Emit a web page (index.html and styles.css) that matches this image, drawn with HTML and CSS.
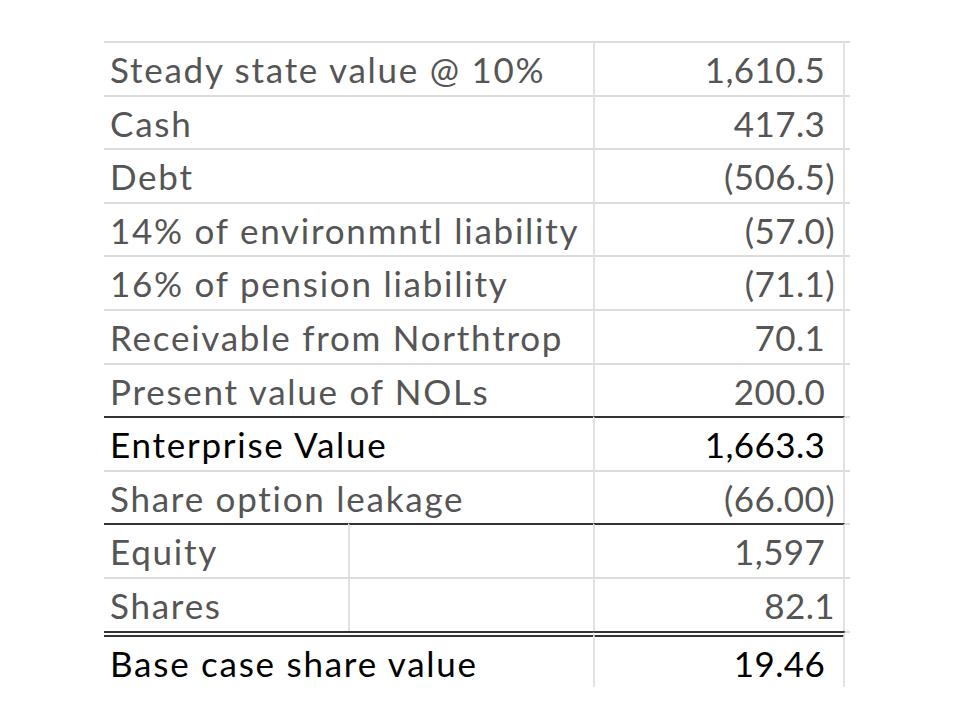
FILE: index.html
```html
<!DOCTYPE html>
<html>
<head>
<meta charset="utf-8">
<link rel="stylesheet" href="styles.css">
</head>
<body>
<div class="sheet">
  <div class="row first">
    <div class="lbl wide">Steady state value @ 10%</div>
    <div class="num">1,610.5<span class="pad">)</span></div><div class="stub"></div>
  </div>
  <div class="row">
    <div class="lbl wide">Cash</div>
    <div class="num">417.3<span class="pad">)</span></div><div class="stub"></div>
  </div>
  <div class="row">
    <div class="lbl wide">Debt</div>
    <div class="num">(506.5)</div><div class="stub"></div>
  </div>
  <div class="row">
    <div class="lbl wide">14% of environmntl liability</div>
    <div class="num">(57.0)</div><div class="stub"></div>
  </div>
  <div class="row">
    <div class="lbl wide">16% of pension liability</div>
    <div class="num">(71.1)</div><div class="stub"></div>
  </div>
  <div class="row">
    <div class="lbl wide">Receivable from Northtrop</div>
    <div class="num">70.1<span class="pad">)</span></div><div class="stub"></div>
  </div>
  <div class="row">
    <div class="lbl wide">Present value of NOLs</div>
    <div class="num">200.0<span class="pad">)</span></div><div class="stub"></div>
  </div>
  <div class="row thick dark">
    <div class="lbl wide">Enterprise Value</div>
    <div class="num">1,663.3<span class="pad">)</span></div><div class="stub"></div>
  </div>
  <div class="row">
    <div class="lbl wide">Share option leakage</div>
    <div class="num">(66.00)</div><div class="stub"></div>
  </div>
  <div class="row thick">
    <div class="lbl">Equity</div><div class="mid"></div>
    <div class="num">1,597<span class="pad">)</span></div><div class="stub"></div>
  </div>
  <div class="row">
    <div class="lbl">Shares</div><div class="mid"></div>
    <div class="num">82.1</div><div class="stub"></div>
  </div>
  <div class="row double dark last">
    <div class="lbl wide">Base case share value</div>
    <div class="num">19.46<span class="pad">)</span></div><div class="stub"></div>
  </div>
</div>
</body>
</html>
```

FILE: styles.css
```css
html, body {
  margin: 0;
  padding: 0;
  background: #ffffff;
}
.sheet {
  padding: 41px 0 0 104px;
  font-family: Lato, "Liberation Sans", sans-serif;
  font-size: 35px;
  color: #555555;
}
.row {
  display: grid;
  grid-template-columns: 244px 245px 252px 5px;
  height: 53.6px;
}
.row > div {
  box-sizing: border-box;
  border-top: 2px solid #dcdcdc;
  line-height: 52px;
  white-space: nowrap;
}
.lbl {
  padding-left: 6px;
  letter-spacing: 1.75px;
}
.lbl.wide {
  grid-column: 1 / span 2;
}
.mid {
  border-left: 2px solid #e2e2e2;
}
.num {
  text-align: right;
  padding-right: 8px;
  letter-spacing: 0.4px;
  border-left: 2px solid #e2e2e2;
  border-right: 2px solid #e2e2e2;
}
.pad {
  visibility: hidden;
}
.row.thick > div:not(.stub) {
  border-top: 2px solid #333333;
}
.row.double > div:not(.stub) {
  border-top: 6px double #333333;
  line-height: 50px;
  padding-top: 1px;
}
.row.dark {
  color: #000000;
}
.row.last {
  height: 56px;
}
```
